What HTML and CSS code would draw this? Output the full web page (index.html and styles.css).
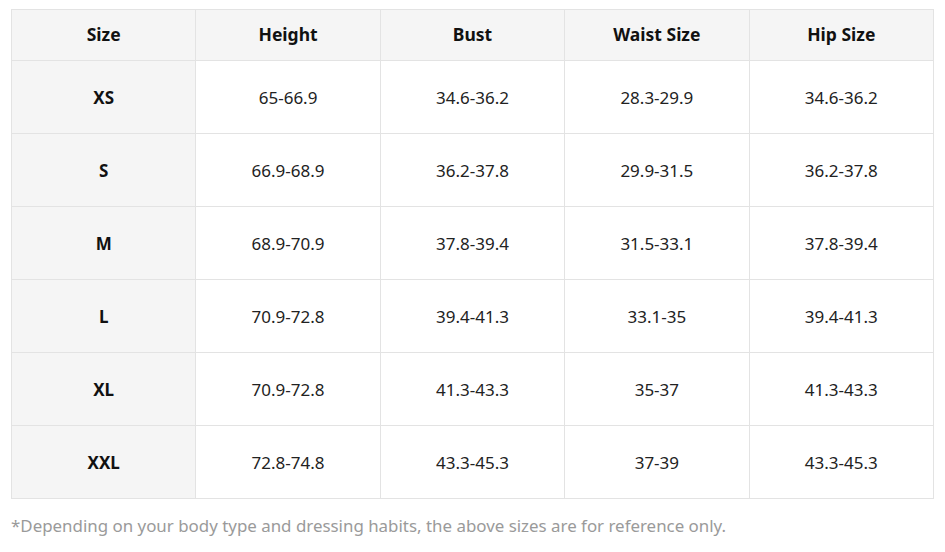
FILE: index.html
```html
<!DOCTYPE html>
<html>
<head>
<meta charset="utf-8">
<link rel="stylesheet" href="styles.css">
</head>
<body>
<div class="wrap">
<table class="size-table">
  <thead>
    <tr><th>Size</th><th>Height</th><th>Bust</th><th>Waist Size</th><th>Hip Size</th></tr>
  </thead>
  <tbody>
    <tr><th>XS</th><td>65-66.9</td><td>34.6-36.2</td><td>28.3-29.9</td><td>34.6-36.2</td></tr>
    <tr><th>S</th><td>66.9-68.9</td><td>36.2-37.8</td><td>29.9-31.5</td><td>36.2-37.8</td></tr>
    <tr><th>M</th><td>68.9-70.9</td><td>37.8-39.4</td><td>31.5-33.1</td><td>37.8-39.4</td></tr>
    <tr><th>L</th><td>70.9-72.8</td><td>39.4-41.3</td><td>33.1-35</td><td>39.4-41.3</td></tr>
    <tr><th>XL</th><td>70.9-72.8</td><td>41.3-43.3</td><td>35-37</td><td>41.3-43.3</td></tr>
    <tr><th>XXL</th><td>72.8-74.8</td><td>43.3-45.3</td><td>37-39</td><td>43.3-45.3</td></tr>
  </tbody>
</table>
<p class="note">*Depending on your body type and dressing habits, the above sizes are for reference only.</p>
</div>
</body>
</html>
```
FILE: styles.css
```css
html, body { margin: 0; padding: 0; background: #fff; }
body { font-family: "Noto Sans", "Open Sans", sans-serif; color: #111; }
.wrap { padding: 9px 11px 0 11px; }
.size-table {
  width: 923px;
  border-collapse: collapse;
  table-layout: fixed;
  font-size: 17px;
}
.size-table th, .size-table td {
  border: 1px solid #e3e3e3;
  text-align: center;
  vertical-align: middle;
  padding: 0;
}
.size-table thead th {
  height: 48px;
  padding-bottom: 2px;
  background: #f5f5f5;
  font-weight: 700;
  font-size: 17.5px;
}
.size-table tbody tr { height: 73px; }
.size-table tbody th {
  background: #f5f5f5;
  font-weight: 700;
}
.size-table td { font-weight: 400; color: #222; }
.note {
  margin: 15px 0 0 0;
  font-size: 16.9px;
  color: #9a9a9a;
}
```
